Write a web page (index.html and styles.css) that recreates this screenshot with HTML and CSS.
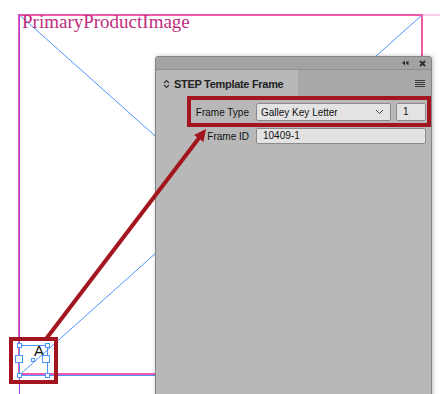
FILE: index.html
```html
<!DOCTYPE html>
<html lang="en">
<head>
    <meta charset="UTF-8">
    <meta name="viewport" content="width=device-width, initial-scale=1.0">
    <title>STEP Template Frame</title>
    <link rel="stylesheet" href="styles.css">
</head>
<body>
    <div class="canvas">
        <!-- Document page: image frame, guides and the little text frame -->
        <svg class="doc-layer" width="440" height="394" viewBox="0 0 440 394">
            <line x1="422" y1="15" x2="440" y2="15" stroke="#f29ad0" stroke-width="1"/>
            <line x1="19.5" y1="15" x2="422" y2="374" stroke="#4d94ff" stroke-width="1"/>
            <line x1="422" y1="15" x2="19.5" y2="375" stroke="#4d94ff" stroke-width="1"/>
            <rect x="19" y="15" width="403" height="359" fill="none" stroke="#ee5aa8" stroke-width="2"/>
            <line x1="19.5" y1="375.5" x2="422" y2="375.5" stroke="#4d94ff" stroke-width="1"/>
            <line x1="19.5" y1="14" x2="19.5" y2="394" stroke="#a044e0" stroke-width="1"/>

            <!-- text frame with handles -->
            <rect x="19.5" y="345.5" width="28" height="30" fill="none" stroke="#4d94ff" stroke-width="1"/>
            <text x="34" y="356" class="frame-letter">A</text>
            <rect x="17.5" y="343.5" width="4" height="4" fill="#fff" stroke="#4d94ff"/>
            <rect x="45.5" y="343.5" width="4" height="4" fill="#fff" stroke="#4d94ff"/>
            <rect x="17.5" y="373.5" width="4" height="4" fill="#fff" stroke="#4d94ff"/>
            <rect x="45.5" y="373.5" width="4" height="4" fill="#fff" stroke="#4d94ff"/>
            <rect x="15.5" y="355.5" width="7" height="7" fill="#fff" stroke="#4d94ff"/>
            <rect x="42.5" y="355.5" width="7" height="7" fill="#fff" stroke="#4d94ff"/>
            <rect x="31.5" y="358.5" width="3" height="3" fill="#fff" stroke="#4d94ff"/>
        </svg>

        <div class="frame-label">PrimaryProductImage</div>

        <!-- Floating panel -->
        <div class="panel">
            <div class="panel-titlebar">
                <svg class="title-icon" width="8" height="6" viewBox="0 0 8 6">
                    <path d="M4 0.5 L1 3 L4 5.5 Z M7.5 0.5 L4.5 3 L7.5 5.5 Z" fill="#2e2e2e"/>
                </svg>
                <svg class="title-icon" width="7" height="7" viewBox="0 0 7 7">
                    <path d="M1 1 L6 6 M6 1 L1 6" stroke="#2e2e2e" stroke-width="1.8"/>
                </svg>
            </div>
            <div class="panel-tabs">
                <div class="panel-tab">
                    <svg class="tab-arrows" width="7" height="10" viewBox="0 0 7 10">
                        <path d="M1 4 L3.5 1.5 L6 4 M1 6 L3.5 8.5 L6 6" fill="none" stroke="#333" stroke-width="1.2"/>
                    </svg>
                    <span class="tab-title">STEP Template Frame</span>
                </div>
                <div class="panel-menu">
                    <div></div>
                    <div></div>
                    <div></div>
                    <div></div>
                </div>
            </div>
            <div class="panel-body">
                <label class="field-label">Frame Type</label>
                <div class="field-row">
                    <div class="select-box">
                        <span>Galley Key Letter</span>
                        <svg width="9" height="6" viewBox="0 0 9 6">
                            <path d="M1 1 L4.5 4.5 L8 1" fill="none" stroke="#444" stroke-width="1"/>
                        </svg>
                    </div>
                    <div class="num-box">1</div>
                </div>
                <label class="field-label">Frame ID</label>
                <div class="text-box">10409-1</div>
            </div>
        </div>

        <!-- Red annotation marks -->
        <svg class="note-layer" width="440" height="394" viewBox="0 0 440 394">
            <rect x="189" y="98" width="240" height="27" fill="none" stroke="#a3161f" stroke-width="4"/>
            <rect x="11" y="339" width="45" height="43" fill="none" stroke="#a3161f" stroke-width="4"/>
            <line x1="46" y1="339" x2="199" y2="138" stroke="#a3161f" stroke-width="4"/>
            <path d="M206 129 L203.5 142 L194 135 Z" fill="#a3161f"/>
        </svg>
    </div>
</body>
</html>
```

FILE: styles.css
```css
body {
    margin: 0;
    padding: 0;
    background-color: #fff;
    overflow: hidden;
    font-family: "Liberation Sans", Arial, sans-serif;
}

.canvas {
    position: relative;
    width: 440px;
    height: 394px;
    overflow: hidden;
}

/* Document layer */
.doc-layer {
    position: absolute;
    top: 0;
    left: 0;
}

.frame-letter {
    font-family: "Liberation Sans", Arial, sans-serif;
    font-size: 15px;
    fill: #111;
}

.frame-label {
    position: absolute;
    top: 12px;
    left: 22px;
    font-family: "Liberation Serif", "Times New Roman", serif;
    font-size: 19px;
    line-height: 19px;
    color: #c02d80;
}

/* Floating panel */
.panel {
    position: absolute;
    top: 56px;
    left: 155px;
    width: 275px;
    height: 345px;
    background-color: #b8b8b8;
    border: 1px solid #858585;
    border-radius: 3px 3px 0 0;
    box-shadow: 1px 0 4px rgba(0, 0, 0, 0.25);
}

.panel-titlebar {
    height: 12px;
    background-color: #a3a3a3;
    border-bottom: 1px solid #8e8e8e;
    border-radius: 3px 3px 0 0;
    display: flex;
    justify-content: flex-end;
    align-items: center;
    gap: 10px;
    padding-right: 5px;
}

.title-icon {
    display: block;
}

.panel-tabs {
    display: flex;
    height: 28px;
    background-color: #a8a8a8;
}

.panel-tab {
    width: 142px;
    background-color: #b8b8b8;
    display: flex;
    align-items: center;
    gap: 4px;
    padding-left: 7px;
    box-sizing: border-box;
}

.tab-arrows {
    display: block;
}

.tab-title {
    font-size: 11px;
    font-weight: bold;
    color: #222;
    letter-spacing: -0.3px;
}

.panel-menu {
    margin-left: auto;
    margin-right: 6px;
    margin-top: 10px;
    display: flex;
    flex-direction: column;
    gap: 1px;
}

.panel-menu div {
    width: 10px;
    height: 1px;
    background-color: #3a3a3a;
}

.panel-body {
    display: grid;
    grid-template-columns: 93px 1fr;
    column-gap: 7px;
    row-gap: 7px;
    padding: 5px 5px 0 0;
    align-items: center;
}

.field-label {
    text-align: right;
    font-size: 10px;
    color: #111;
}

.field-row {
    display: flex;
    gap: 5px;
}

.select-box {
    flex: 1;
    height: 18px;
    box-sizing: border-box;
    display: flex;
    align-items: center;
    justify-content: space-between;
    padding: 0 6px 0 4px;
    background-color: #e3e3e3;
    border: 1px solid #8c8c8c;
    border-radius: 2px;
    font-size: 10px;
    color: #111;
}

.num-box {
    width: 30px;
    height: 18px;
    box-sizing: border-box;
    padding-left: 6px;
    line-height: 16px;
    background-color: #e3e3e3;
    border: 1px solid #8c8c8c;
    border-radius: 2px;
    font-size: 10px;
    color: #111;
}

.text-box {
    height: 16px;
    box-sizing: border-box;
    padding-left: 6px;
    line-height: 14px;
    background-color: #e3e3e3;
    border: 1px solid #8c8c8c;
    border-radius: 2px;
    font-size: 10px;
    color: #111;
}

/* Annotation layer */
.note-layer {
    position: absolute;
    top: 0;
    left: 0;
    pointer-events: none;
}
```
